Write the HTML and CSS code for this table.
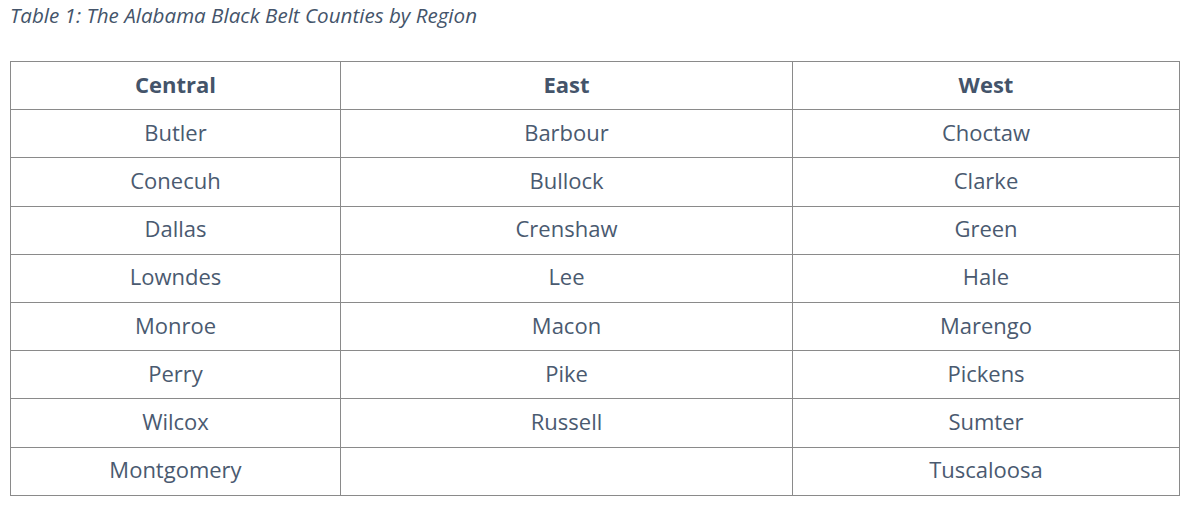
FILE: index.html
```html
<!DOCTYPE html>
<html>
<head>
<meta charset="utf-8">
<link rel="stylesheet" href="styles.css">
</head>
<body>
<div class="page">
  <p class="caption">Table 1: The Alabama Black Belt Counties by Region</p>
  <table class="counties">
    <colgroup>
      <col class="c1"><col class="c2"><col class="c3">
    </colgroup>
    <thead>
      <tr><th>Central</th><th>East</th><th>West</th></tr>
    </thead>
    <tbody>
      <tr><td>Butler</td><td>Barbour</td><td>Choctaw</td></tr>
      <tr><td>Conecuh</td><td>Bullock</td><td>Clarke</td></tr>
      <tr><td>Dallas</td><td>Crenshaw</td><td>Green</td></tr>
      <tr><td>Lowndes</td><td>Lee</td><td>Hale</td></tr>
      <tr><td>Monroe</td><td>Macon</td><td>Marengo</td></tr>
      <tr><td>Perry</td><td>Pike</td><td>Pickens</td></tr>
      <tr><td>Wilcox</td><td>Russell</td><td>Sumter</td></tr>
      <tr><td>Montgomery</td><td></td><td>Tuscaloosa</td></tr>
    </tbody>
  </table>
</div>
</body>
</html>
```
FILE: styles.css
```css
html, body {
  margin: 0;
  padding: 0;
  background: #ffffff;
}
.page {
  padding: 2px 0 0 10px;
  font-family: "Open Sans", Lato, sans-serif;
  color: #44546a;
}
.caption {
  margin: 0 0 33px 0;
  font-style: italic;
  font-size: 20.6px;
  line-height: 26px;
  color: #44546a;
}
.counties {
  border-collapse: collapse;
  width: 1169px;
  table-layout: fixed;
}
.c1 { width: 330px; }
.c2 { width: 452px; }
.c3 { width: 387px; }
.counties tr {
  height: 48.2px;
}
.counties th,
.counties td {
  border: 1px solid #8a8a8a;
  padding: 0 0 4px 0;
  text-align: center;
  vertical-align: middle;
  font-size: 22px;
  line-height: 28px;
  color: #4a5a70;
}
.counties th {
  font-weight: bold;
  color: #44546a;
}
```
